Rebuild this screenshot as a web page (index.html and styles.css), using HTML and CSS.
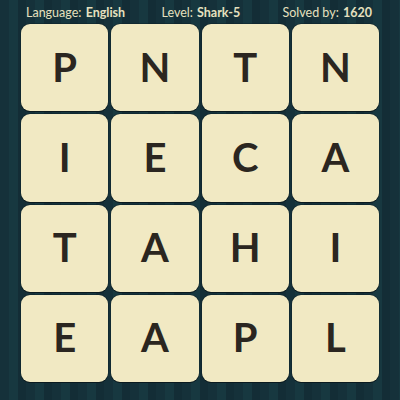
FILE: index.html
```html
<!DOCTYPE html>
<html>
<head>
<meta charset="utf-8">
<link rel="stylesheet" href="styles.css">
</head>
<body>
<div class="page">
  <div class="header">
    <span class="info">Language: <b>English</b></span>
    <span class="info">Level: <b>Shark-5</b></span>
    <span class="info">Solved by: <b>1620</b></span>
  </div>
  <div class="board">
    <div class="tile">P</div><div class="tile">N</div><div class="tile">T</div><div class="tile">N</div>
    <div class="tile">I</div><div class="tile">E</div><div class="tile">C</div><div class="tile">A</div>
    <div class="tile">T</div><div class="tile">A</div><div class="tile">H</div><div class="tile">I</div>
    <div class="tile">E</div><div class="tile">A</div><div class="tile">P</div><div class="tile">L</div>
  </div>
</div>
</body>
</html>
```
FILE: styles.css
```css
html, body {
  margin: 0;
  padding: 0;
}
body {
  width: 400px;
  height: 400px;
  overflow: hidden;
  background-color: #15313a;
  background-image: repeating-linear-gradient(90deg,
    #15313a 0px, #15313a 9px,
    #173840 9px, #173840 18px,
    #132d36 18px, #132d36 26px);
  font-family: "Lato", "Liberation Sans", sans-serif;
}
.page {
  display: flex;
  flex-direction: column;
}
.header {
  height: 24px;
  display: flex;
  align-items: center;
  justify-content: space-between;
  padding: 0 28px 0 26px;
  box-sizing: border-box;
  color: #e6e0bf;
  font-size: 12.5px;
}
.info:nth-child(2) {
  margin-left: -6px;
}
.info b {
  font-weight: 700;
  margin-left: 1px;
}
.board {
  margin-left: 21px;
  width: 358px;
  height: 358px;
  display: grid;
  grid-template-columns: repeat(4, 1fr);
  grid-template-rows: repeat(4, 1fr);
  gap: 3px;
}
.tile {
  background: #f1e9c3;
  border-radius: 9px;
  box-shadow: 0 1px 0 #0b1a1f, 0 0 0 0.5px #0e2228;
  display: flex;
  align-items: center;
  justify-content: center;
  color: #2b2620;
  font-size: 40px;
  font-weight: 700;
  line-height: 1;
  padding-bottom: 2px;
  box-sizing: border-box;
}
```
